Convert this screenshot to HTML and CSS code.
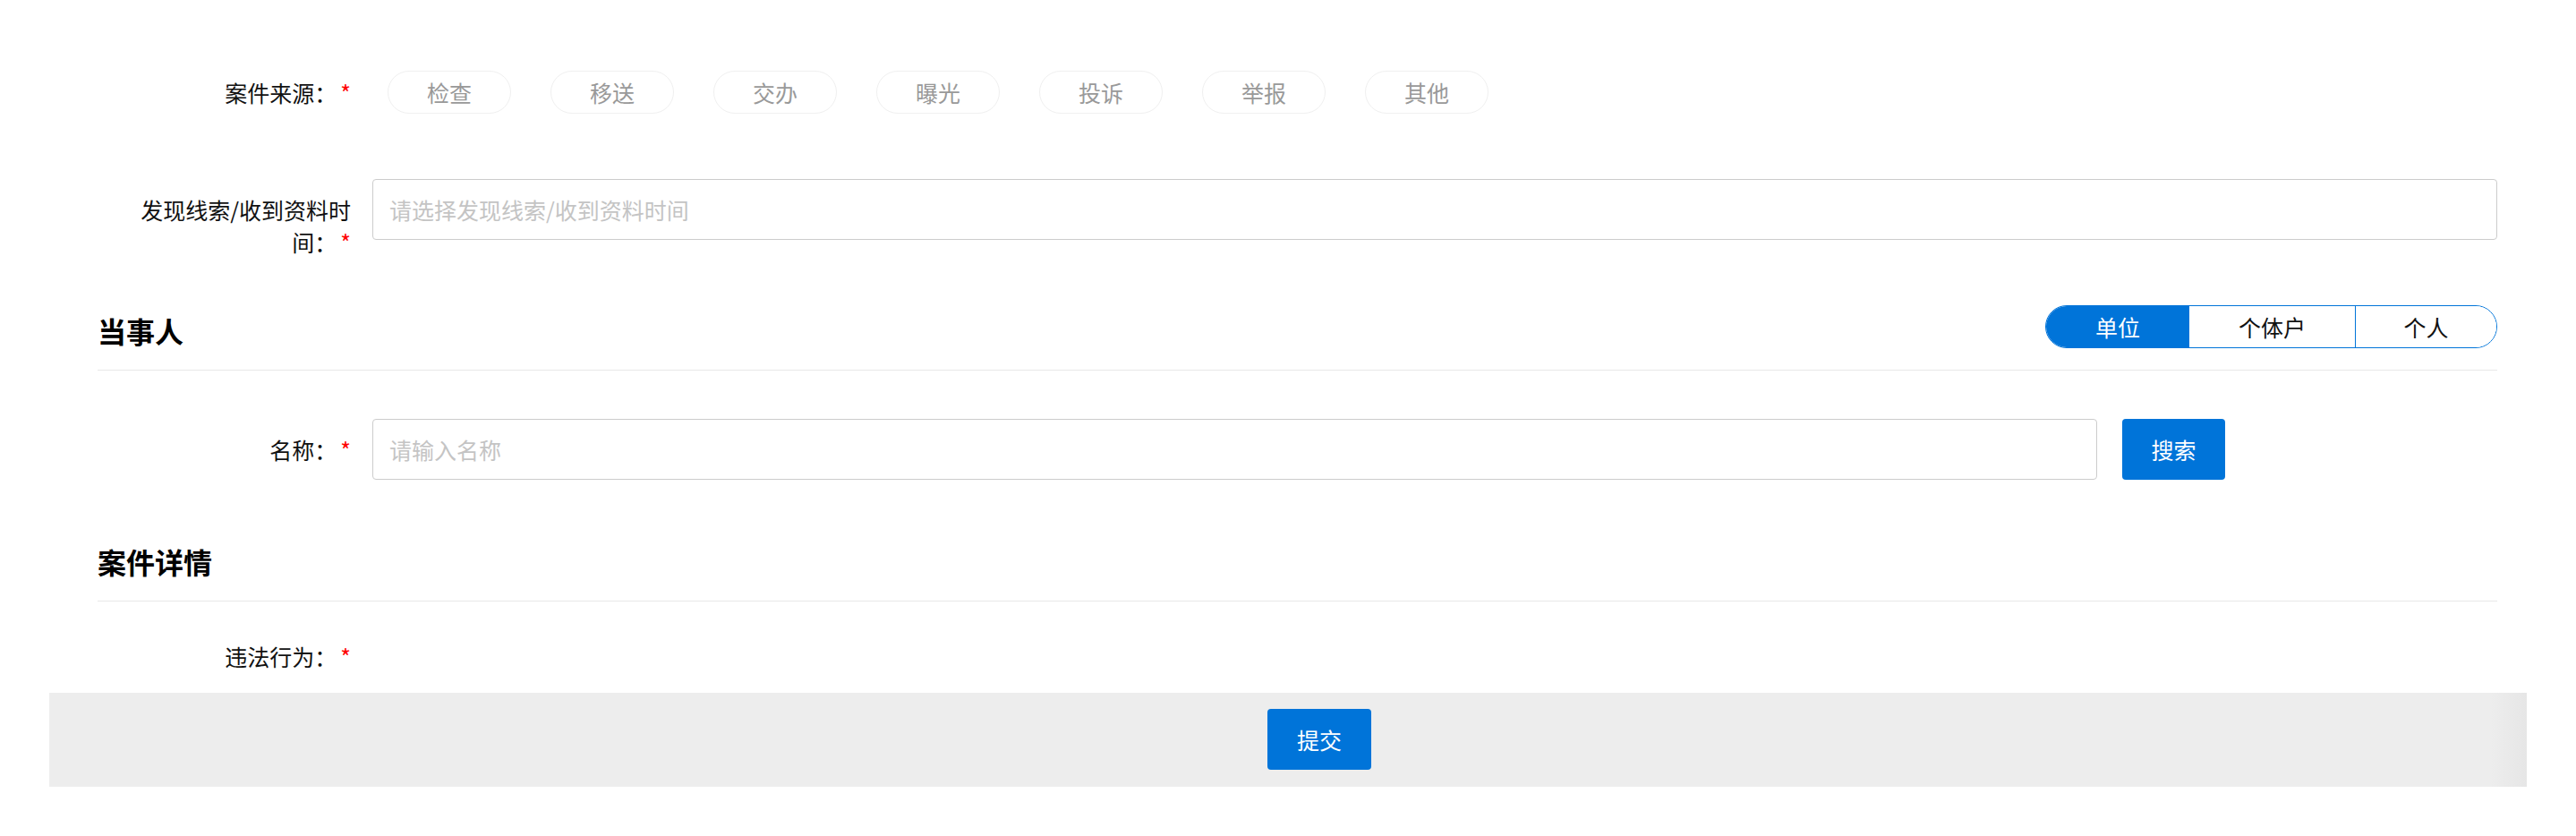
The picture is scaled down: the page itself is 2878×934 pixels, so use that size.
FILE: index.html
```html
<!DOCTYPE html>
<html lang="zh-CN">
<head>
<meta charset="utf-8">
<title>案件登记</title>
<link rel="stylesheet" href="styles.css">
</head>
<body>
<div class="page">
  <div class="form-item first">
    <label class="label">案件来源：<span class="req">*</span></label>
    <div class="chips">
      <span class="chip">检查</span>
      <span class="chip">移送</span>
      <span class="chip">交办</span>
      <span class="chip">曝光</span>
      <span class="chip">投诉</span>
      <span class="chip">举报</span>
      <span class="chip">其他</span>
    </div>
  </div>

  <div class="form-item date-row">
    <label class="label"><span class="label-line">发现线索/收到资料时</span><span class="label-line">间：<span class="req">*</span></span></label>
    <div class="input wide"><span class="placeholder">请选择发现线索/收到资料时间</span></div>
  </div>

  <div class="section-head party-head">
    <h2 class="section-title">当事人</h2>
    <div class="segmented">
      <span class="seg active">单位</span>
      <span class="seg mid">个体户</span>
      <span class="seg last">个人</span>
    </div>
  </div>

  <div class="form-item name-row">
    <label class="label">名称：<span class="req">*</span></label>
    <div class="input name"><span class="placeholder">请输入名称</span></div>
    <button class="btn search">搜索</button>
  </div>

  <div class="section-head detail-head">
    <h2 class="section-title">案件详情</h2>
  </div>

  <div class="form-item act-row">
    <label class="label">违法行为：<span class="req">*</span></label>
  </div>
</div>

<div class="footer">
  <button class="btn submit">提交</button>
</div>
</body>
</html>
```

FILE: styles.css
```css
* {
  box-sizing: border-box;
}

html, body {
  margin: 0;
  padding: 0;
  background: #ffffff;
}

body {
  font-family: "Noto Sans CJK SC", "Noto Sans", "Liberation Sans", sans-serif;
  font-size: 25px;
  color: #111111;
  width: 2878px;
  height: 934px;
  overflow: hidden;
}

.page {
  padding: 0 88px 0 109px;
}

.form-item {
  display: flex;
  align-items: flex-start;
}

.label {
  flex: 0 0 307px;
  padding: 16px 24px 0 31px;
  text-align: right;
  line-height: 36px;
  color: #111111;
}

.label-line {
  display: block;
  white-space: nowrap;
}

.req {
  color: #ff0000;
  margin-left: 4px;
}

.first {
  margin-top: 79px;
}

.first .label {
  padding-top: 6px;
}

.chips {
  display: flex;
  gap: 44px;
  margin-left: 17px;
}

.chip {
  width: 138px;
  height: 48px;
  border: 1px solid #f0f0f0;
  border-radius: 24px;
  color: #999999;
  display: flex;
  align-items: center;
  justify-content: center;
  line-height: 1;
}

.date-row {
  margin-top: 73px;
}

.input {
  height: 68px;
  border: 1px solid #cccccc;
  border-radius: 4px;
  display: flex;
  align-items: center;
  padding-left: 18px;
  background: #ffffff;
}

.input.wide {
  flex: 1;
}

.input.name {
  width: 1927px;
  flex: 0 0 1927px;
}

.placeholder {
  color: #c4c4c4;
}

.section-head {
  display: flex;
  justify-content: space-between;
  align-items: flex-start;
  height: 73px;
  border-bottom: 1px solid #e8e8e8;
}

.party-head {
  margin-top: 53px;
}

.detail-head {
  margin-top: 63px;
}

.section-title {
  margin: 0;
  padding-top: 4px;
  font-size: 32px;
  font-weight: 700;
  line-height: 48px;
  color: #000000;
}

.segmented {
  display: flex;
  height: 48px;
  border: 1px solid #0074d9;
  border-radius: 24px;
  overflow: hidden;
}

.seg {
  display: flex;
  align-items: center;
  justify-content: center;
  color: #111111;
  background: #ffffff;
}

.seg.active {
  width: 160px;
  background: #0074d9;
  color: #ffffff;
}

.seg.mid {
  width: 186px;
  border-right: 1px solid #0074d9;
}

.seg.last {
  width: 157px;
}

.name-row {
  margin-top: 54px;
}

.btn {
  font-family: inherit;
  font-size: 25px;
  color: #ffffff;
  background: #0074d9;
  border: none;
  border-radius: 4px;
  height: 68px;
  padding: 0;
  cursor: pointer;
}

.btn.search {
  width: 115px;
  margin-left: 28px;
}

.act-row {
  margin-top: 27px;
}

.footer {
  margin: 23px 55px 0 55px;
  height: 105px;
  padding: 18px 0 0 70px;
  display: flex;
  justify-content: center;
  align-items: flex-start;
  background: linear-gradient(to right, #ededed calc(100% - 40px), #e6e6e6);
}

.btn.submit {
  width: 116px;
}
```
